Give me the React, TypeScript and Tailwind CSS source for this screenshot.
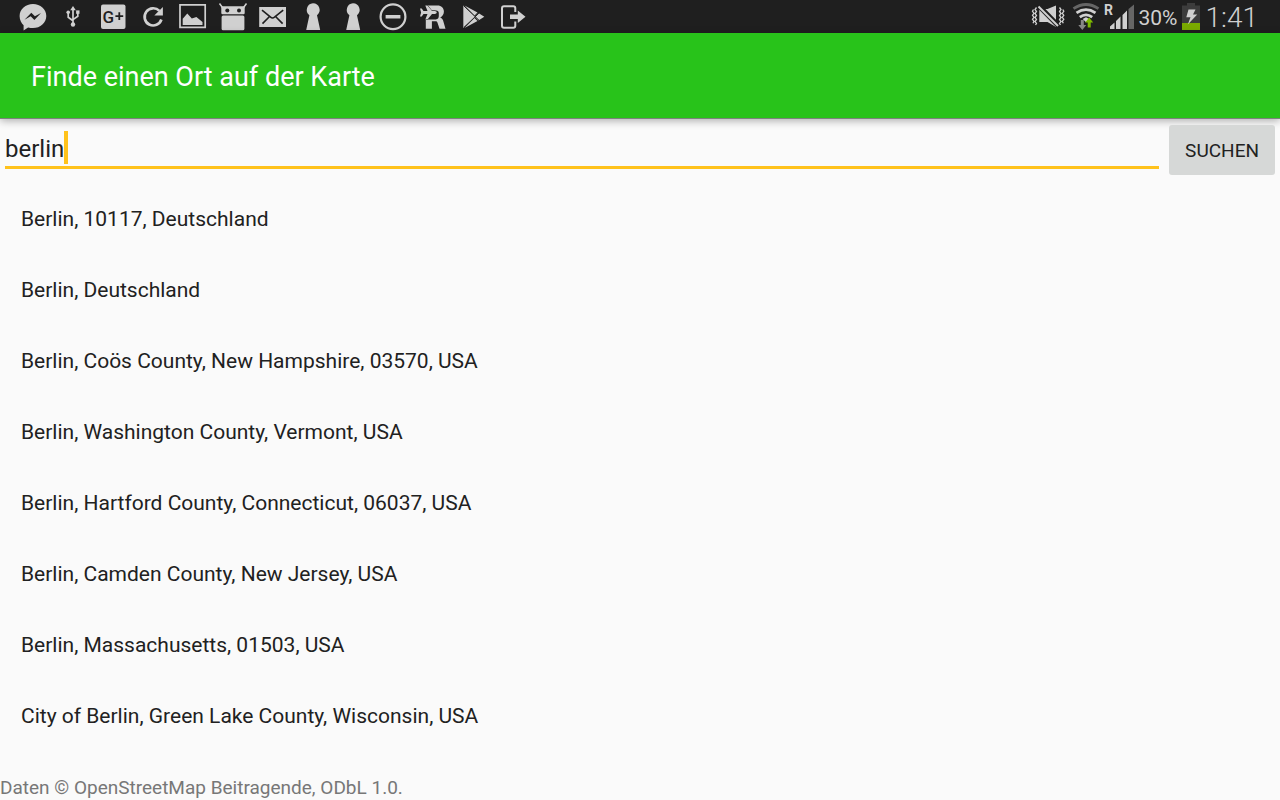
import { useState, type ReactNode } from "react";

function StatusIcon({ label, width = 40, children }: { label: string; width?: number; children: ReactNode }) {
  return (
    <svg role="img" aria-label={label} width={width} height="33" viewBox={`0 0 ${width} 33`} className="shrink-0 text-[#d0d0d0]" fill="currentColor">
      {children}
    </svg>
  );
}

const DARK = "#1f1f1f";

function Keyhole() {
  return (
    <StatusIcon label="VPN">
      <path d="M20 3.2a6.7 6.7 0 0 1 4 12L27.2 30H13.2L16.4 15.2A6.7 6.7 0 0 1 20 3.2z" />
    </StatusIcon>
  );
}

function Notifications() {
  return (
    <div className="flex pl-[13px]">
      <StatusIcon label="Messenger">
        <path d="M20 4C12.600 4 6.600 9.300 6.600 16c0 3.900 1.700 7 4 9.300V30.500l4.500-3.100c1.500.5 3.200.7 4.900.7 7.400 0 13.300-5.400 13.300-12.100S27.400 4 20 4z" />
        <path fill={DARK} d="M11.500 19.800L18.300 12.700l3.600 3.600 6.100-3.400-6.600 7-3.700-3.600z" />
      </StatusIcon>
      <StatusIcon label="USB">
        <g fill="none" stroke="currentColor" strokeWidth="1.700">
          <path d="M20 9v15M15.200 12v5.200l4.800 3.600M24.800 12v4.200L20 19.600" />
        </g>
        <path d="M20 6l2.800 4.200h-5.600z" />
        <circle cx="20" cy="24.500" r="2.200" />
        <circle cx="15.200" cy="12.200" r="1.800" />
        <path d="M23.100 10.400h3.400v3.400h-3.400z" />
      </StatusIcon>
      <StatusIcon label="Google+">
        <rect x="8" y="4.500" width="24.500" height="24.500" rx="2" />
        <text x="9.500" y="22.600" fontSize="17" fontWeight="500" fontFamily="Roboto, sans-serif" fill={DARK}>G</text>
        <path d="M22.400 15.300h3V12.300h1.800v3h3v1.800h-3v3h-1.800v-3h-3z" fill={DARK} />
      </StatusIcon>
      <StatusIcon label="Aktualisieren">
        <path d="M26.400 10.900A8.600 8.600 0 1 0 28.400 19.500" fill="none" stroke="currentColor" strokeWidth="2.700" />
        <path d="M29.900 7v8.600h-8.600z" />
      </StatusIcon>
      <StatusIcon label="Bild">
        <path d="M7 4.800h25.200v22.600H7z" fill="none" stroke="currentColor" strokeWidth="1.700" />
        <path d="M9.700 25v-6.200l4.600-5.400 4.500 5 4.600-1.300 6.100 4.800V25z" />
      </StatusIcon>
      <StatusIcon label="F-Droid">
        <path d="M6.500 3.500L9.800 8M33.500 3.500L30.200 8" stroke="currentColor" strokeWidth="1.500" />
        <rect x="8.300" y="6.200" width="23.400" height="8" rx="1.200" />
        <circle cx="14.300" cy="10.400" r="2" fill={DARK} />
        <circle cx="26" cy="10.400" r="2" fill={DARK} />
        <rect x="8.600" y="15.400" width="22.800" height="14.800" rx="1.500" />
      </StatusIcon>
      <StatusIcon label="E-Mail">
        <path d="M6.200 7h26.800v20H6.200z" />
        <path d="M9 10.200l8.600 7q1.900 1.500 3.900 0l8.700-7M9.500 23.600l6.800-6.900M29.600 23.600l-6.800-6.900" fill="none" stroke={DARK} strokeWidth="1.600" />
      </StatusIcon>
      <Keyhole />
      <Keyhole />
      <StatusIcon label="Nicht stören">
        <circle cx="20" cy="16.700" r="12.400" fill="none" stroke="currentColor" strokeWidth="2.200" />
        <path d="M12.600 15h14.800v3.500H12.600z" />
      </StatusIcon>
      <StatusIcon label="Flugreisen">
        <path d="M15 5.400h9.500c3.800 0 6.400 2.500 6.400 6.200 0 2.800-1.400 4.900-3.700 5.800 1.500.5 2.400 1.500 2.900 3.100l2.400 8.200h-6l-2-6c-.4-1.100-1-1.500-2-1.500h-3.600v7.500h-6.100v-9.300h10c2 0 3-1.300 3-3.300v-2.800c0-1.700-1-2.700-2.600-2.700H15z" />
        <path d="M7 8.600h1.700l1.800 2.500h4L12.300 5.500h2.200l4.500 5.600h2.800q2 .3 2 1.400-.2 1.200-2 1.400H19l-4.500 5.600h-2.200l2.200-5.600h-4l-1.800 2.500H7l1.100-3.900z" stroke={DARK} strokeWidth="1" paintOrder="stroke" />
      </StatusIcon>
      <StatusIcon label="Play Store">
        <path d="M10.300 5.500L22.700 16.700 10.300 27.900z" />
        <path d="M11.500 5.500l13 6.900-3 3zM11.500 27.900l13-6.900-3-3zM25.400 13l5.900 3.700-5.900 3.700-3.700-3.700z" />
        <path d="M11 6l15 14.300M11 27.400l15-14.300" stroke={DARK} strokeWidth="1" />
      </StatusIcon>
      <StatusIcon label="Abmelden">
        <path d="M22.300 12V8.200q0-2-2-2H11q-2 0-2 2v17.500q0 2 2 2h9.300q2 0 2-2V21.500" fill="none" stroke="currentColor" strokeWidth="2" />
        <path d="M17 14.400h7.800V10.500l7.700 6.200-7.700 6.200V19H17z" />
      </StatusIcon>
    </div>
  );
}

function SystemStatus() {
  return (
    <div className="flex items-center pr-[22px] text-[#d0d0d0]">
      <StatusIcon label="Stumm">
        <path d="M11.300 9h8.200L28 5.500v21.500L19.500 22h-8.200z" />
        <path d="M10.500 5.500L31 26.500" stroke={DARK} strokeWidth="5" />
        <path d="M10.500 6.500l19.500 19.500" stroke="currentColor" strokeWidth="1.900" />
        <path d="M8.500 7.500l-1.500 2 1.500 2-1.500 2 1.500 2-1.500 2 1.500 2-1.500 2 1.500 2-1 1.500M5.500 9.500l-1 1.800 1.500 2-1.500 2 1.500 2-1.500 2 1.500 2-1 2M31.500 7.500l1.500 2-1.500 2 1.500 2-1.500 2 1.500 2-1.500 2 1.500 2-1.500 2 1 1.500M34.800 9.500l1 1.800-1.500 2 1.500 2-1.500 2 1.500 2-1.500 2 1 2" fill="none" stroke="currentColor" strokeWidth="1.300" />
      </StatusIcon>
      <StatusIcon label="WLAN" width={34}>
        <g fill="none" strokeWidth="2.800">
          <path d="M5.500 8.700Q18 .3 30.500 8.700" stroke="#666" />
          <path d="M8.500 12.900q9.500-6.400 19 0M11.800 17.100q6.200-4.500 12.400 0" stroke="currentColor" />
        </g>
        <path d="M18 17.200l3.300 1.800-3.300 3.300-3.300-3.300z" />
        <path d="M12.800 20h3v5h2.500l-4 5-4-5h2.500z" fill="#888" />
        <path d="M19.700 27.500v-5h-2.500l4-5 4 5h-2.500v5z" fill="#7fbb00" />
      </StatusIcon>
      <StatusIcon label="Mobilfunk" width={37}>
        <text x="2" y="14.500" fontSize="14" fontWeight="700" fontFamily="Roboto, sans-serif">R</text>
        <path d="M8 29v-2.500l4.500-4V29zM14 29v-8l4.500-4.500V29zM20.500 29V15l4.500-4.500V29z" />
        <path d="M26.500 29V9L32 4.500V29z" fill="#666" />
      </StatusIcon>
      <span className="pt-[3px] text-[21px] leading-[30px]">30%</span>
      <StatusIcon label="Akku wird geladen" width={26}>
        <path d="M9 3h8v2.500h5V30H4V5.500h5z" fill="#3c3c3c" />
        <path d="M4 23h18v7H4z" fill="#7aaa00" />
        <path d="M10.500 9.500h7L15 14.500h4.200L9.800 24.500l2.700-7.300H8.300z" />
      </StatusIcon>
      <time className="pt-[3px] pl-[2px] text-[28px] leading-[30px] font-light">1:41</time>
    </div>
  );
}

const results = [
  "Berlin, 10117, Deutschland",
  "Berlin, Deutschland",
  "Berlin, Coös County, New Hampshire, 03570, USA",
  "Berlin, Washington County, Vermont, USA",
  "Berlin, Hartford County, Connecticut, 06037, USA",
  "Berlin, Camden County, New Jersey, USA",
  "Berlin, Massachusetts, 01503, USA",
  "City of Berlin, Green Lake County, Wisconsin, USA",
];

export default function App() {
  const [query, setQuery] = useState("berlin");
  return (
    <div className="flex min-h-screen flex-col bg-[#fafafa] font-[Roboto,sans-serif] text-[#212121]">
      <div className="flex justify-between overflow-hidden bg-[#1f1f1f]">
        <Notifications />
        <SystemStatus />
      </div>
      <header className="border-b border-[#7d827d] bg-[#28c31a] px-[31px] pt-[26px] pb-[22px] text-white shadow-[0_2px_8px_rgba(0,0,0,0.3)]">
        <h1 className="text-[27px] leading-[37px]">Finde einen Ort auf der Karte</h1>
      </header>
      <main className="flex grow flex-col">
        <form className="flex items-start gap-[10px] px-[5px] pt-[6px]" onSubmit={(event) => event.preventDefault()}>
          <label className="flex grow cursor-text items-center border-b-[3px] border-[#ffc21c] pt-[6px] pb-[2px]">
            <input
              aria-label="Ort suchen"
              value={query}
              onChange={(event) => setQuery(event.target.value)}
              className="[field-sizing:content] h-[33px] pt-[3px] text-[24px] leading-[30px] caret-transparent outline-none"
            />
            <span aria-hidden="true" className="h-[33px] w-1 bg-[#ffc21c]" />
          </label>
          <button type="submit" className="h-[50px] rounded-[3px] bg-[#d6d8d7] px-4 pt-[2px] text-[19px]">
            SUCHEN
          </button>
        </form>
        <ul className="pt-[9px]">
          {results.map((place) => (
            <li key={place}>
              <button type="button" className="w-full px-[21px] py-[22px] text-left text-[21px] leading-[27px]">
                {place}
              </button>
            </li>
          ))}
        </ul>
      </main>
      <footer className="text-[19px] leading-[24px] text-[#777]">Daten © OpenStreetMap Beitragende, ODbL 1.0.</footer>
    </div>
  );
}
